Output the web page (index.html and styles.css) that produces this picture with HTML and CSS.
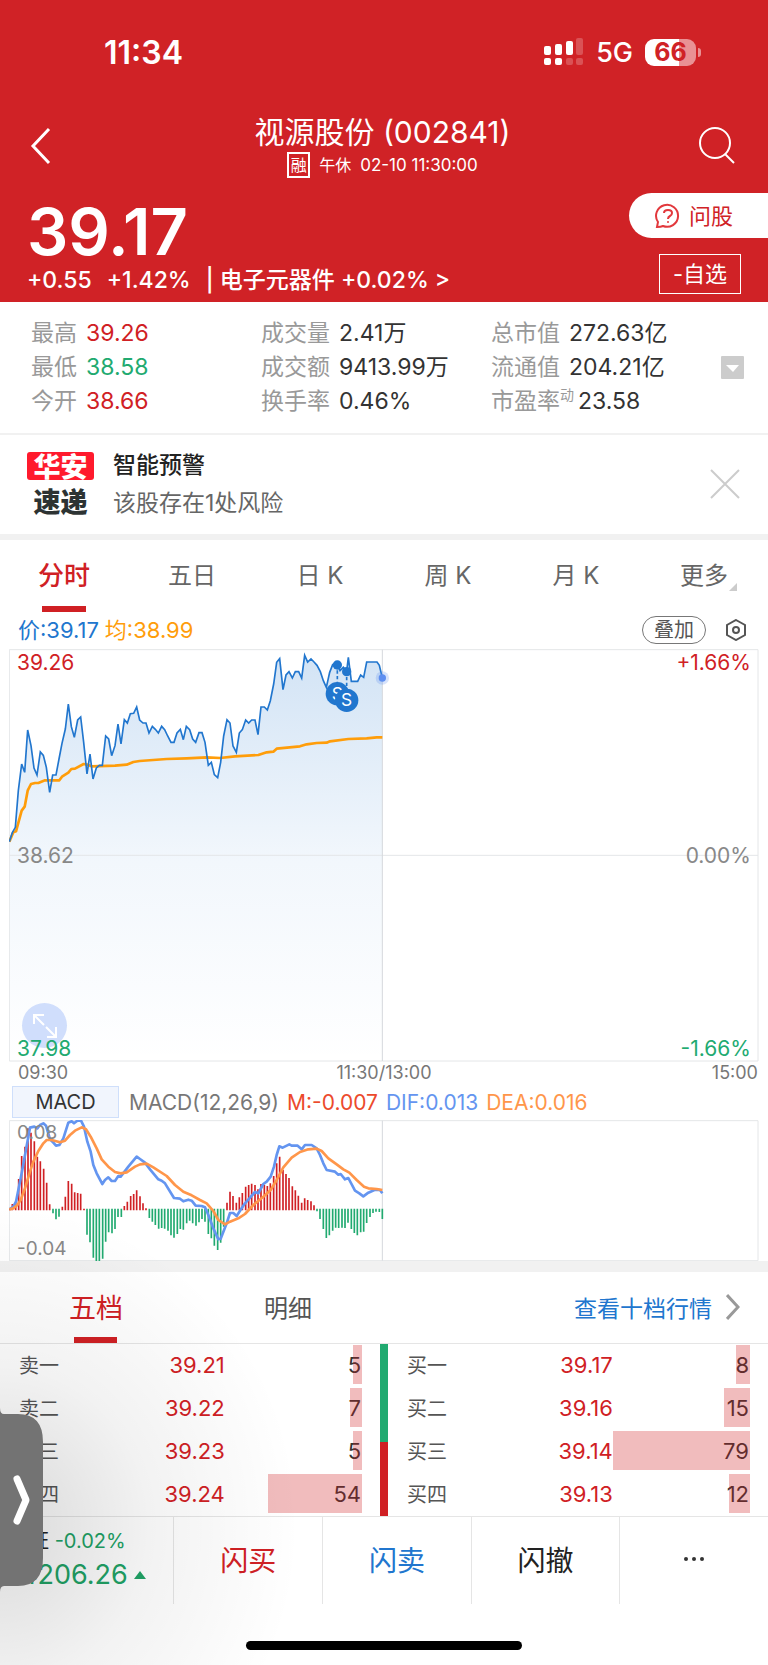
FILE: index.html
```html
<!DOCTYPE html>
<html lang="zh-CN">
<head>
    <meta charset="UTF-8">
    <meta name="viewport" content="width=device-width, initial-scale=1">
    <title>视源股份 (002841)</title>
    <link rel="stylesheet" href="styles.css">
</head>
<body>
<div class="page">
    <header class="header">
        <div class="status-bar">
            <span class="clock">11:34</span>
            <div class="status-icons">
                <svg width="40" height="28" viewBox="0 0 40 28" fill="#fff">
                    <rect x="0" y="8" width="7" height="9" rx="2"/>
                    <rect x="11" y="6" width="7" height="11" rx="2"/>
                    <rect x="22" y="3" width="7" height="14" rx="2"/>
                    <rect x="32" y="0" width="7" height="17" rx="2" opacity=".22"/>
                    <rect x="0" y="20" width="7" height="7" rx="2"/>
                    <rect x="11" y="20" width="7" height="7" rx="2"/>
                    <rect x="22" y="20" width="7" height="7" rx="2" opacity=".22"/>
                    <rect x="32" y="20" width="7" height="7" rx="2" opacity=".22"/>
                </svg>
                <span class="network">5G</span>
                <span class="battery">66</span>
            </div>
        </div>

        <nav class="title-bar">
            <button class="icon-btn" aria-label="返回">
                <svg width="22" height="38" viewBox="0 0 22 38" fill="none" stroke="#fff" stroke-width="3"><path d="M20 2 L4 19 L20 36"/></svg>
            </button>
            <div class="title">
                <h1>视源股份 (002841)</h1>
                <p><span class="margin-tag">融</span><span>午休</span><span>02-10 11:30:00</span></p>
            </div>
            <button class="icon-btn" aria-label="搜索">
                <svg width="38" height="38" viewBox="0 0 38 38" fill="none" stroke="#fff" stroke-width="2"><circle cx="17" cy="16" r="15"/><path d="M27 27 L36 36"/></svg>
            </button>
        </nav>

        <div class="price-area">
            <div class="price-info">
                <div class="price">39.17</div>
                <div class="change">
                    <span>+0.55</span>
                    <span>+1.42%</span>
                    <a href="#sector">| 电子元器件 +0.02% &gt;</a>
                </div>
            </div>
            <div class="price-actions">
                <button class="ask-btn">
                    <svg width="26" height="26" viewBox="0 0 26 26" fill="none" stroke="#e2383c" stroke-width="2"><path d="M2 24 L3 19 A11 11 0 1 1 8 23 Q6 24 2 24 Z"/><path d="M9 10 Q9 7 13 7 Q17 7 17 10 Q17 12 15 13 Q13 14 13 16"/><circle cx="13" cy="19" r="1" fill="#e2383c" stroke="none"/></svg>
                    问股
                </button>
                <button class="watch-btn">-自选</button>
            </div>
        </div>
    </header>

    <section class="quote">
        <dl>
            <div><dt>最高</dt><dd class="up">39.26</dd></div>
            <div><dt>最低</dt><dd class="down">38.58</dd></div>
            <div><dt>今开</dt><dd class="up">38.66</dd></div>
        </dl>
        <dl>
            <div><dt>成交量</dt><dd>2.41万</dd></div>
            <div><dt>成交额</dt><dd>9413.99万</dd></div>
            <div><dt>换手率</dt><dd>0.46%</dd></div>
        </dl>
        <dl>
            <div><dt>总市值</dt><dd>272.63亿</dd></div>
            <div><dt>流通值</dt><dd>204.21亿</dd></div>
            <div class="pe"><dt>市盈率<sup>动</sup></dt><dd>23.58</dd></div>
        </dl>
        <button class="expand-btn" aria-label="展开">
            <svg width="23" height="23" viewBox="0 0 23 23"><rect width="23" height="23" rx="1" fill="#ccc"/><path d="M5 9 H18 L12 16 Z" fill="#fff"/></svg>
        </button>
    </section>

    <section class="alert">
        <div class="alert-logo"><b class="logo-top">华安</b><b class="logo-bottom">速递</b></div>
        <div class="alert-text">
            <h2>智能预警</h2>
            <p>该股存在1处风险</p>
        </div>
        <button class="icon-btn" aria-label="关闭">
            <svg width="30" height="30" viewBox="0 0 30 30" fill="none" stroke="#ccc" stroke-width="2"><path d="M1 1 L29 29 M29 1 L1 29"/></svg>
        </button>
    </section>

    <nav class="period-tabs">
        <button class="active">分时</button>
        <button>五日</button>
        <button>日 K</button>
        <button>周 K</button>
        <button>月 K</button>
        <button class="more">更多</button>
    </nav>

    <div class="legend">
        <span class="blue">价:39.17</span>
        <span class="orange">均:38.99</span>
        <button class="overlay-btn">叠加</button>
        <button class="icon-btn" aria-label="设置">
            <svg width="20" height="22" viewBox="0 0 20 22" fill="none" stroke="#555" stroke-width="2"><path d="M10 1 L19 6 V16 L10 21 L1 16 V6 Z"/><circle cx="10" cy="11" r="3"/></svg>
        </button>
    </div>

    <section class="chart">
        <svg viewBox="27 25 2250 1239">
            <defs>
                <linearGradient id="area" x1="0" y1="0" x2="0" y2="1">
                    <stop offset="0" stop-color="#2176ce" stop-opacity=".2"/>
                    <stop offset=".5" stop-color="#2176ce" stop-opacity=".06"/>
                    <stop offset="1" stop-color="#2176ce" stop-opacity="0"/>
                </linearGradient>
            </defs>
            <path id="priceArea" fill="url(#area)"/>
            <g fill="none" stroke="#e4e6e8" stroke-width="3">
                <path d="M28 27 H2274 V1261 H28 Z"/>
                <path d="M28 644 H2274"/>
                <path d="M1147 27 V1261" stroke="#d5d8dd"/>
            </g>
            <polyline fill="none" stroke="#ff9d0a" stroke-width="8" stroke-linejoin="round" points="28,603 40,575 48,572 65,510 74,498 83,450 93,430 105,427 115,427 135,419 178,419 186,408 205,396 214,385 225,384 251,370 262,372 275,377 345,375 380,372 400,364 419,361 500,355 560,353 620,350 660,352 705,347 775,343 800,335 820,333 830,324 900,317 920,311 950,307 980,306 990,302 1045,295 1100,293 1130,290 1147,290"/>
            <polyline id="priceLine" fill="none" stroke="#2176ce" stroke-width="5" points="28,603 37,576 46,560 55,450 65,370 74,395 83,268 93,315 102,382 111,403 121,334 130,344 139,380 149,455 158,403 168,403 177,355 186,308 196,265 205,190 214,258 223,290 233,238 242,229 251,305 261,400 270,340 279,415 289,382 298,374 307,374 317,286 326,295 335,345 345,315 354,250 363,310 373,237 382,247 391,219 401,218 410,199 419,238 429,247 438,247 447,277 457,257 466,266 475,277 485,257 494,267 503,286 513,305 522,305 531,277 541,266 550,297 559,257 569,267 578,295 587,305 597,276 606,276 615,305 625,374 634,365 643,402 653,411 662,365 671,286 681,237 690,247 699,316 709,335 718,277 727,267 737,238 746,247 755,238 765,238 774,282 783,199 793,199 802,208 811,180 821,130 830,65 839,54 849,147 858,103 867,93 877,112 886,93 896,93 905,112 914,44 923,64 933,55 942,64 951,74 961,93 970,120 979,140 989,95 998,72 1011,72 1020,90 1030,80 1040,92 1045,50 1054,122 1063,122 1073,122 1082,103 1091,110 1100,64 1110,64 1119,64 1131,64 1138,74 1147,112"/>
            <g fill="#2176ce">
                <path d="M1012 72 V130 M1040 92 V150" stroke="#2176ce" stroke-width="5" stroke-dasharray="10 7"/>
                <circle cx="1012" cy="73" r="14"/>
                <circle cx="1040" cy="93" r="14"/>
                <circle cx="1012" cy="159" r="35"/>
                <text class="marker" x="1012" y="177">S</text>
                <circle cx="1040" cy="179" r="35"/>
                <text class="marker" x="1040" y="197">S</text>
            </g>
            <circle cx="1147" cy="112" r="20" fill="#5f8ff0" opacity=".25"/>
            <circle cx="1147" cy="112" r="11" fill="#5f8ff0"/>
        </svg>
        <button class="zoom-btn" aria-label="放大">
            <svg width="24" height="24" viewBox="0 0 24 24" fill="none" stroke="#fff" stroke-width="2"><path d="M1 10 V1 H11 M1 1 L11 11 M13 13 L23 23 M23 13 V23 H14"/></svg>
        </button>
        <div class="scale">
            <div class="up"><span>39.26</span><span>+1.66%</span></div>
            <div><span>38.62</span><span>0.00%</span></div>
            <div class="down"><span>37.98</span><span>-1.66%</span></div>
        </div>
    </section>
    <div class="time-axis"><span>09:30</span><span>11:30/13:00</span><span>15:00</span></div>

    <div class="indicator">
        <button>MACD</button>
        <span>MACD(12,26,9)</span>
        <span class="m">M:-0.007</span>
        <span class="dif">DIF:0.013</span>
        <span class="dea">DEA:0.016</span>
    </div>
    <section class="chart macd">
        <svg viewBox="27 420 2250 423">
            <g fill="none" stroke="#e4e6e8" stroke-width="3">
                <path d="M28 422 H2274 V842 H28 Z"/>
                <path d="M1147 422 V842" stroke="#d5d8dd"/>
            </g>
            <path id="barsUp" stroke="#d02024" stroke-width="5"/>
            <path id="barsDown" stroke="#21aa70" stroke-width="5"/>
            <polyline fill="none" stroke="#6495f0" stroke-width="8" stroke-linejoin="round" points="28,688 40,680 48,665 65,580 90,443 103,440 112,445 120,435 130,430 138,437 150,478 160,488 168,497 178,495 190,475 205,428 215,424 222,430 232,422 243,422 252,440 262,485 272,515 280,555 290,580 307,612 315,600 325,592 335,603 345,603 355,588 362,590 385,560 410,530 420,537 435,548 450,568 475,598 485,602 495,610 522,654 540,656 550,664 565,659 575,662 587,677 605,678 615,682 625,705 640,745 655,778 662,776 680,730 690,699 700,699 710,708 725,685 735,670 765,636 775,640 790,612 800,605 812,590 822,560 830,525 838,499 848,503 868,493 875,497 893,497 905,508 915,495 935,495 950,505 960,525 970,550 980,570 1005,575 1015,584 1022,582 1035,598 1045,594 1065,632 1078,640 1090,649 1105,638 1125,629 1140,630 1147,640"/>
            <polyline fill="none" stroke="#ff964a" stroke-width="8" stroke-linejoin="round" points="28,688 40,685 52,675 62,660 75,625 90,575 100,545 115,513 130,490 140,480 155,480 180,487 195,482 210,465 225,452 245,442 258,448 272,470 290,505 305,538 325,560 345,576 362,580 380,577 405,560 420,553 440,551 460,562 500,588 525,615 550,635 575,646 600,660 620,670 640,693 655,720 675,733 690,725 715,715 735,702 760,675 790,650 812,630 830,600 850,562 875,533 900,516 925,508 950,506 965,513 985,535 1010,553 1030,568 1048,578 1070,600 1092,620 1105,625 1130,627 1147,630"/>
        </svg>
        <div class="scale">
            <div><span>0.08</span></div>
            <div><span>-0.04</span></div>
        </div>
    </section>

    <nav class="depth-tabs">
        <button class="active">五档</button>
        <button>明细</button>
        <a href="#depth10">查看十档行情
            <svg width="14" height="26" viewBox="0 0 14 26" fill="none" stroke="#999" stroke-width="3"><path d="M1 1 L12 13 L1 25"/></svg>
        </a>
    </nav>

    <section class="depth">
        <table>
            <tr><th>卖一</th><td class="up">39.21</td><td>5<i style="width: 6.3%"></i></td></tr>
            <tr><th>卖二</th><td class="up">39.22</td><td>7<i style="width: 8.9%"></i></td></tr>
            <tr><th>卖三</th><td class="up">39.23</td><td>5<i style="width: 6.3%"></i></td></tr>
            <tr><th>卖四</th><td class="up">39.24</td><td>54<i style="width: 68.4%"></i></td></tr>
        </table>
        <div class="ratio"></div>
        <table>
            <tr><th>买一</th><td class="up">39.17</td><td>8<i style="width: 10.1%"></i></td></tr>
            <tr><th>买二</th><td class="up">39.16</td><td>15<i style="width: 19%"></i></td></tr>
            <tr><th>买三</th><td class="up">39.14</td><td>79<i style="width: 100%"></i></td></tr>
            <tr><th>买四</th><td class="up">39.13</td><td>12<i style="width: 15.2%"></i></td></tr>
        </table>
    </section>

    <footer class="bottom-bar">
        <a class="index" href="#index">
            <span>上证 <em>-0.02%</em></span>
            <strong>4206.26 <svg width="12" height="8" viewBox="0 0 12 8"><path d="M6 0 L12 8 H0 Z" fill="#21a366"/></svg></strong>
        </a>
        <button class="buy">闪买</button>
        <button class="sell">闪卖</button>
        <button>闪撤</button>
        <button aria-label="更多">
            <svg width="22" height="6" viewBox="0 0 22 6" fill="#333"><circle cx="3" cy="3" r="2"/><circle cx="11" cy="3" r="2"/><circle cx="19" cy="3" r="2"/></svg>
        </button>
    </footer>
    <div class="home-indicator"></div>

    <div class="shade"></div>
    <button class="drawer" aria-label="打开侧栏">
        <svg width="43" height="184" viewBox="0 0 43 184"><path d="M0 0 Q0 6 4 6 H18 Q43 6 43 34 V150 Q43 178 18 178 H4 Q0 178 0 184 Z" fill="#737373"/><path d="M17 71 L26 92 L17 113" fill="none" stroke="#fff" stroke-width="7" stroke-linecap="round" stroke-linejoin="round"/></svg>
    </button>
</div>

<script>
    // close the price line down to the bottom of the chart
    const line = document.getElementById("priceLine").getAttribute("points");
    document.getElementById("priceArea").setAttribute("d", "M28 1261 L" + line + " L1147 1261 Z");

    // MACD histogram, one bar end per minute, zero line at 689
    const zero = 689;
    const step = 1119 / 120;
    const bars = [
        685, 672, 665, 597, 528, 500, 445, 458, 484, 530, 544, 566, 608, 673, 700, 718, 710, 680, 650, 603,
        611, 637, 639, 641, 686, 764, 787, 833, 843, 843, 836, 785, 757, 760, 747, 711, 711, 678, 665, 648,
        642, 631, 649, 670, 685, 714, 725, 735, 746, 744, 746, 752, 766, 773, 762, 747, 749, 730, 722, 730,
        737, 727, 717, 725, 762, 775, 797, 810, 788, 740, 668, 635, 648, 668, 652, 639, 620, 615, 611, 615,
        628, 612, 614, 618, 610, 588, 550, 530, 570, 582, 594, 619, 631, 647, 668, 655, 660, 664, 676, 694,
        717, 747, 774, 766, 752, 743, 744, 743, 744, 728, 747, 759, 766, 757, 755, 729, 711, 699, 695, 696, 717
    ];
    let up = "";
    let down = "";
    bars.forEach((y, i) => {
        const x = Math.round(28 + i * step);
        if (y < zero) {
            up += `M${x} ${zero + 2} V${y}`;
        } else {
            down += `M${x} ${zero - 3} V${y}`;
        }
    });
    document.getElementById("barsUp").setAttribute("d", up);
    document.getElementById("barsDown").setAttribute("d", down);
</script>
</body>
</html>
```

FILE: styles.css
```css
* {
    box-sizing: border-box;
}
body {
    margin: 0;
    background: #fff;
    color: #333;
    font-family: Inter, "Noto Sans CJK SC", sans-serif;
    font-size: 23px;
}
h1, h2, p, dl, dd {
    margin: 0;
    font-weight: 400;
}
button {
    margin: 0;
    padding: 0;
    border: none;
    background: none;
    color: inherit;
    font: inherit;
    cursor: pointer;
}
a {
    color: inherit;
    text-decoration: none;
}
svg {
    display: block;
}
.page {
    position: relative;
    overflow: hidden;
    min-height: 100vh;
}
.up { color: #d02024; }
.down { color: #21aa70; }
.blue { color: #2176ce; }
.orange { color: #ff9d0a; }
.icon-btn {
    display: flex;
}

/* header */
.header {
    background: #d02226;
    color: #fff;
    height: 302px;
}
.status-bar {
    display: flex;
    justify-content: space-between;
    align-items: center;
    height: 104px;
    padding: 0 72px 0 104px;
}
.clock {
    font-size: 32px;
    font-weight: 600;
}
.status-icons {
    display: flex;
    align-items: center;
    gap: 12px;
}
.network {
    font-size: 27px;
    font-weight: 500;
}
.battery {
    position: relative;
    width: 51px;
    height: 27px;
    border-radius: 9px;
    background: linear-gradient(90deg, #fff 66%, #e99194 66%);
    color: #d02226;
    font-size: 25px;
    font-weight: 700;
    line-height: 27px;
    text-align: center;
}
.battery::after {
    content: "";
    position: absolute;
    right: -5px;
    top: 9px;
    width: 3px;
    height: 9px;
    border-radius: 0 3px 3px 0;
    background: #e99194;
}
.title-bar {
    display: grid;
    grid-template-columns: 1fr auto 1fr;
    align-items: center;
    height: 84px;
    padding: 0 32px 0 29px;
}
.title-bar .icon-btn:last-child {
    justify-self: end;
}
.title {
    text-align: center;
}
.title h1 {
    font-size: 30px;
    line-height: 38px;
}
.title p {
    display: flex;
    justify-content: center;
    align-items: center;
    gap: 9px;
    font-size: 17px;
    line-height: 28px;
}
.title p span:nth-child(2) {
    font-size: 16px;
}
.title .margin-tag {
    width: 23px;
    border: 2px solid #fff;
    font-size: 16px;
    line-height: 22px;
}
.price-area {
    display: flex;
    justify-content: space-between;
}
.price-info {
    padding: 9px 0 0 27px;
}
.price {
    font-size: 65px;
    font-weight: 600;
    line-height: 70px;
}
.change {
    display: flex;
    gap: 15px;
    font-size: 23px;
    font-weight: 500;
    line-height: 26px;
}
.price-actions {
    display: flex;
    flex-direction: column;
    align-items: flex-end;
    gap: 16px;
    padding-top: 5px;
}
.ask-btn {
    display: flex;
    align-items: center;
    gap: 8px;
    height: 45px;
    padding: 0 35px 0 26px;
    border-radius: 23px 0 0 23px;
    background: #fff;
    color: #d02226;
    font-size: 22px;
    line-height: 42px;
}
.watch-btn {
    height: 40px;
    margin-right: 27px;
    padding: 0 13px;
    border: 1px solid #fff;
    font-size: 22px;
    line-height: 36px;
}

/* quote numbers */
.quote {
    display: grid;
    grid-template-columns: repeat(3, 1fr) 23px;
    align-items: center;
    justify-items: start;
    padding: 14px 24px 15px 31px;
    border-bottom: 2px solid #f1f1f1;
}
.quote dl div {
    display: flex;
    gap: 9px;
    line-height: 34px;
    white-space: nowrap;
}
.quote dt {
    color: #999;
}
.quote .pe {
    gap: 4px;
}
.quote sup {
    font-size: 14px;
    line-height: 0;
}
.expand-btn {
    justify-self: end;
}

/* alert */
.alert {
    display: flex;
    align-items: center;
    height: 105px;
    padding: 0 28px 2px 27px;
    border-bottom: 6px solid #f1f1f1;
}
.alert-logo {
    width: 67px;
    text-align: center;
    font-family: "Noto Sans CJK SC", sans-serif;
    font-size: 27px;
}
.alert-logo b {
    display: block;
    font-weight: 900;
}
.logo-top {
    border-radius: 3px;
    background: #ff1a2d;
    color: #fff;
    line-height: 28px;
}
.logo-bottom {
    margin-top: 6px;
    color: #2d3333;
    line-height: 29px;
}
.alert-text {
    flex: 1;
    padding-left: 19px;
}
.alert-text h2 {
    color: #222;
    font-size: 23px;
    font-weight: 500;
    line-height: 38px;
}
.alert-text p {
    color: #666;
    font-size: 23px;
    line-height: 38px;
}

/* period tabs */
.period-tabs {
    display: grid;
    grid-template-columns: repeat(6, 1fr);
    height: 72px;
    color: #666;
    font-size: 24px;
}
.period-tabs button {
    position: relative;
    padding-bottom: 5px;
}
.period-tabs .active {
    color: #d02024;
    font-size: 26px;
    font-weight: 500;
}
.period-tabs .active::after {
    content: "";
    position: absolute;
    left: 50%;
    bottom: 0;
    width: 44px;
    height: 6px;
    margin-left: -22px;
    background: #d02024;
}
.period-tabs .more::after {
    content: "";
    position: absolute;
    right: 31px;
    bottom: 21px;
    border: 4px solid #ccc;
    border-top-color: transparent;
    border-left-color: transparent;
}

/* chart */
.legend {
    display: flex;
    align-items: center;
    gap: 6px;
    height: 37px;
    padding: 0 22px 2px 18px;
    font-size: 22px;
    line-height: 30px;
}
.overlay-btn {
    height: 28px;
    margin-left: auto;
    margin-right: 14px;
    padding: 0 11px;
    border: 1px solid #777;
    border-radius: 14px;
    color: #555;
    font-size: 20px;
    line-height: 24px;
}
.chart {
    position: relative;
    margin: 0 9px;
}
.chart > svg {
    width: 100%;
    height: auto;
}
.marker {
    fill: #fff;
    font-size: 52px;
    text-anchor: middle;
}
.scale {
    position: absolute;
    inset: 0;
    display: flex;
    flex-direction: column;
    justify-content: space-between;
    padding: 1px 8px 0;
    font-size: 21px;
    line-height: 26px;
    color: #888;
    pointer-events: none;
}
.scale div {
    display: flex;
    justify-content: space-between;
}
.scale .up { color: #d02024; }
.scale .down { color: #21aa70; }
.zoom-btn {
    position: absolute;
    left: 13px;
    bottom: 14px;
    display: flex;
    justify-content: center;
    align-items: center;
    width: 45px;
    height: 45px;
    border-radius: 50%;
    background: #d0defc;
}
.time-axis {
    display: flex;
    justify-content: space-between;
    padding: 0 10px;
    color: #777;
    font-size: 18px;
    line-height: 22px;
}
.time-axis span {
    flex: 1;
}
.time-axis span:first-child {
    text-indent: 8px;
}
.time-axis span:nth-child(2) {
    text-align: center;
}
.time-axis span:last-child {
    text-align: right;
}
.indicator {
    display: flex;
    align-items: center;
    gap: 8px;
    height: 36px;
    padding: 0 12px;
    color: #777;
    font-size: 21px;
}
.indicator button {
    width: 107px;
    height: 32px;
    margin-right: 2px;
    border: 1px solid #cfdffb;
    background: #f1f5fd;
    color: #333;
    font-size: 20px;
}
.m { color: #ec4a2c; }
.dif { color: #6495f0; }
.dea { color: #ff964a; }
.macd .scale {
    font-size: 19px;
    line-height: 24px;
}

/* order book */
.depth-tabs {
    display: flex;
    height: 83px;
    border-top: 11px solid #f1f1f1;
    border-bottom: 1px solid #e5e5e5;
    color: #555;
    font-size: 24px;
}
.depth-tabs button {
    position: relative;
    width: 25%;
    padding-bottom: 2px;
}
.depth-tabs .active {
    color: #d02024;
    font-size: 27px;
}
.depth-tabs .active::after {
    content: "";
    position: absolute;
    left: 50%;
    bottom: 0;
    width: 43px;
    height: 6px;
    margin-left: -22px;
    background: #d02024;
}
.depth-tabs a {
    display: flex;
    align-items: center;
    gap: 14px;
    margin-left: auto;
    padding: 0 28px 2px 0;
    color: #2176ce;
    font-size: 23px;
}
.depth {
    display: grid;
    grid-template-columns: 1fr 8px 1fr;
    border-bottom: 1px solid #e5e5e5;
}
.depth table {
    width: calc(100% - 37px);
    margin: 0 18px 0 19px;
    table-layout: fixed;
    border-collapse: collapse;
    font-size: 22px;
    line-height: 26px;
}
.depth tr {
    height: 43px;
}
.depth th {
    width: 25%;
    padding: 0;
    color: #555;
    font-size: 20px;
    font-weight: 400;
    text-align: left;
}
.depth td {
    position: relative;
    padding: 0 0 2px;
    text-align: right;
}
.depth td:nth-child(2) {
    width: 35%;
}
.depth td:last-child {
    padding-right: 1px;
}
.depth i {
    position: absolute;
    right: 0;
    top: 1px;
    bottom: 3px;
    background: rgba(209, 32, 36, 0.3);
}
.ratio {
    background: linear-gradient(#21aa70 57%, #d02024 57%);
}

/* bottom */
.bottom-bar {
    display: grid;
    grid-template-columns: 7fr 6fr 6fr 6fr 6fr;
    height: 87px;
    font-size: 28px;
    color: #222;
}
.bottom-bar button {
    display: flex;
    justify-content: center;
    align-items: center;
    padding-bottom: 3px;
    border-left: 1px solid #e5e5e5;
}
.bottom-bar .buy { color: #d02024; }
.bottom-bar .sell { color: #2176ce; }
.index {
    padding: 7px 0 0 9px;
    font-size: 20px;
    line-height: 34px;
    white-space: nowrap;
}
.index em {
    color: #21a366;
    font-style: normal;
}
.index strong {
    display: flex;
    align-items: center;
    gap: 6px;
    padding-left: 11px;
    color: #21a366;
    font-size: 27px;
    font-weight: 400;
}
.home-indicator {
    width: 36%;
    height: 9px;
    margin: 37px auto 15px;
    border-radius: 5px;
    background: #000;
}

/* side drawer handle */
.shade {
    position: absolute;
    left: 0;
    bottom: 0;
    width: 320px;
    height: 480px;
    background: radial-gradient(ellipse 300px 320px at 0 340px, rgba(0, 0, 0, 0.15), rgba(0, 0, 0, 0.05) 50%, transparent);
    pointer-events: none;
}
.drawer {
    position: absolute;
    left: 0;
    bottom: 73px;
}
```
